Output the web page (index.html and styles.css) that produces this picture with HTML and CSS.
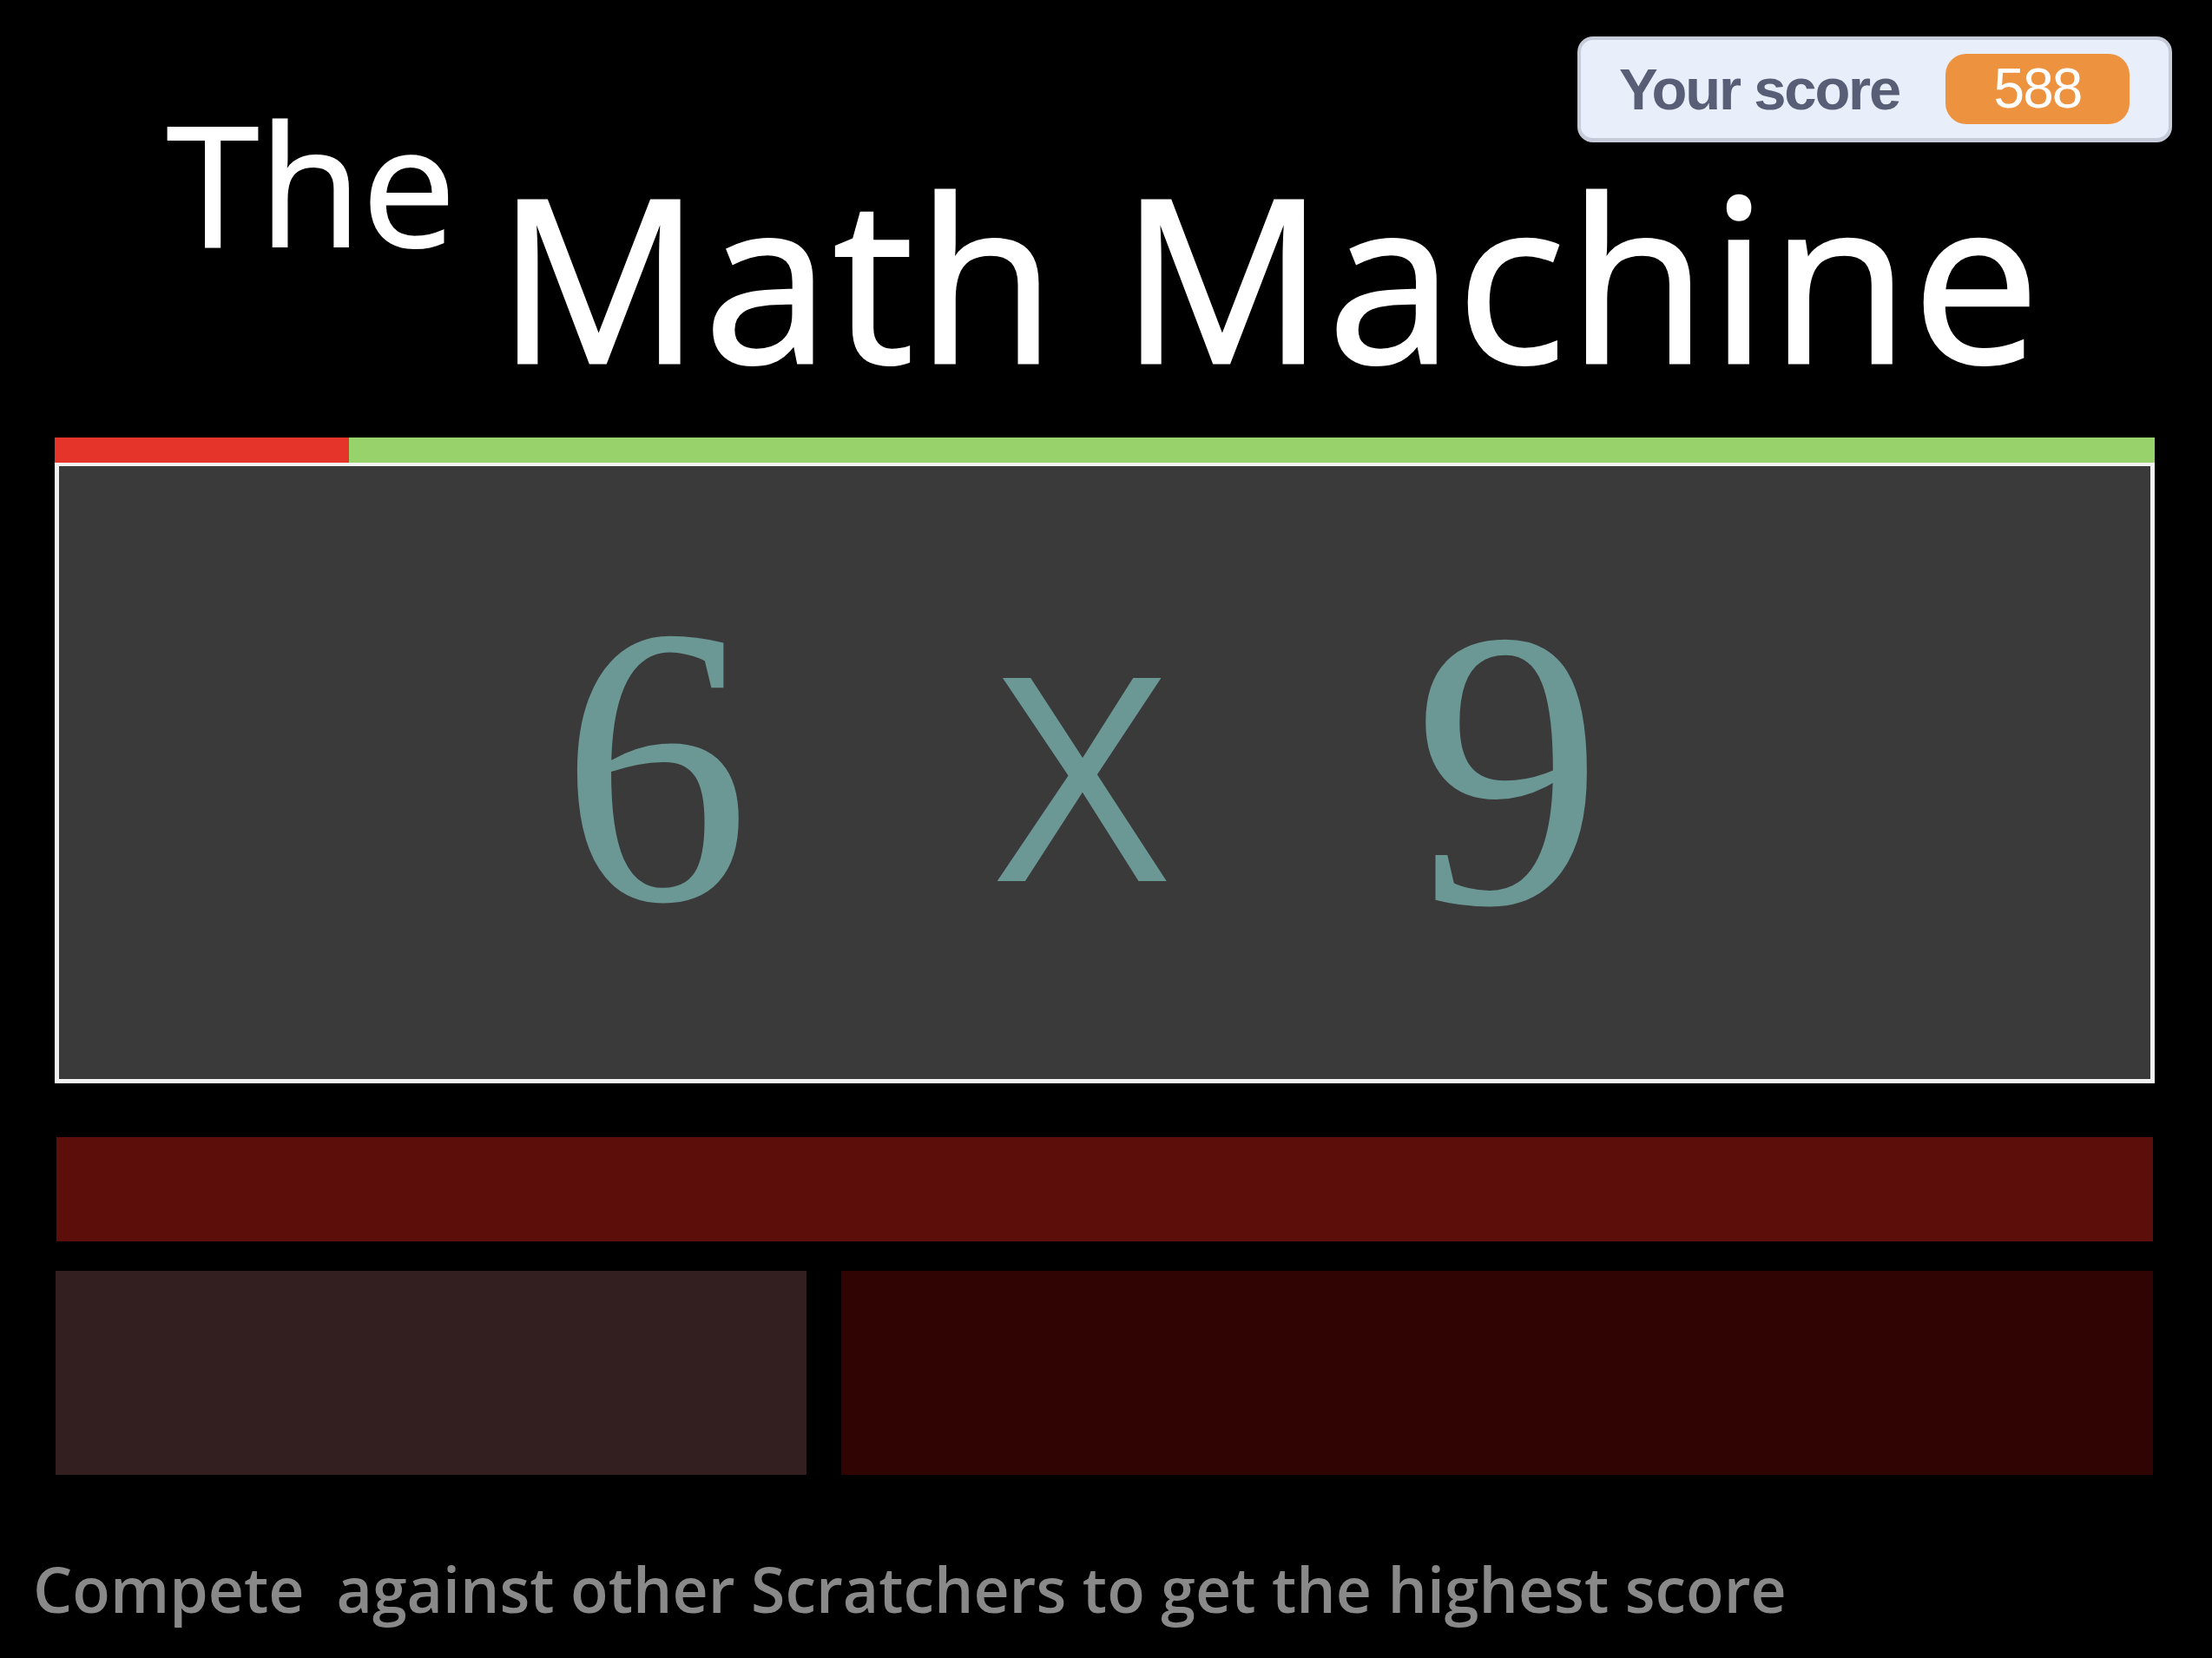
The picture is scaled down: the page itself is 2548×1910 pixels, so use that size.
FILE: index.html
```html
<!DOCTYPE html>
<html lang="en">
<head>
<meta charset="utf-8">
<title>The Math Machine</title>
<link rel="stylesheet" href="styles.css">
</head>
<body>
<div class="monitor">
  <span class="monitor-label">Your score</span>
  <span class="monitor-value">588</span>
</div>
<main class="stage">
  <header class="title">
    <span class="title-the">The</span>
    <span class="title-main">Math Machine</span>
  </header>
  <div class="timer">
    <div class="timer-used" style="width:339px"></div>
    <div class="timer-left"></div>
  </div>
  <section class="question">
    <span class="q-num q-first">6</span>
    <span class="q-op">X</span>
    <span class="q-num q-second">9</span>
  </section>
  <div class="answer-bar"></div>
  <div class="answer-row">
    <div class="answer-left"></div>
    <div class="answer-right"></div>
  </div>
</main>
<p class="footer">Compete&nbsp; against other Scratchers to get the highest score</p>
</body>
</html>
```

FILE: styles.css
```css
html, body {
  margin: 0;
  padding: 0;
  background: #000;
}

body {
  width: 2548px;
  height: 1910px;
  overflow: hidden;
  position: relative;
  font-family: "Open Sans", "Noto Sans", sans-serif;
}

/* score monitor overlay */
.monitor {
  position: absolute;
  left: 1817px;
  top: 42px;
  width: 685px;
  height: 122px;
  box-sizing: border-box;
  background: #e8eefa;
  border: 4px solid #c5cbd8;
  border-bottom-width: 5px;
  border-radius: 18px;
  display: flex;
  align-items: center;
  justify-content: space-between;
  padding: 0 45px 0 44px;
  font-family: "Liberation Sans", Arial, sans-serif;
}

.monitor-label {
  font-size: 67px;
  font-weight: 700;
  letter-spacing: -2.2px;
  color: #575e75;
  line-height: 1;
}

.monitor-value {
  width: 212px;
  height: 81px;
  border-radius: 24px;
  background: #ed923f;
  color: #fff;
  font-size: 64px;
  letter-spacing: -2px;
  line-height: 81px;
  text-align: center;
}

.stage {
  padding-left: 63px;
  width: 2419px;
}

.title {
  height: 504px;
  box-sizing: border-box;
  display: flex;
  align-items: flex-start;
  padding-top: 113px;
  padding-left: 129px;
  color: #fff;
}

.title-the {
  font-size: 193px;
  line-height: 1;
  -webkit-text-stroke: 2px #fff;
}

.title-main {
  font-size: 262px;
  line-height: 1;
  margin-top: 73px;
  margin-left: 47px;
  letter-spacing: 3px;
  white-space: nowrap;
  -webkit-text-stroke: 3px #fff;
}

.timer {
  display: flex;
  height: 29px;
}

.timer-used {
  background: #e5352a;
}

.timer-left {
  flex: 1;
  background: #97d26a;
}

.question {
  height: 715px;
  box-sizing: border-box;
  border: 5px solid #f2f2f2;
  border-top-width: 4px;
  background: #3a3a3a;
  display: grid;
  grid-template-columns: 300px 300px 300px;
  column-gap: 191px;
  align-items: start;
  padding-left: 537px;
  color: #6b9794;
  line-height: 1;
}

.q-num {
  font-family: "Liberation Serif", "Times New Roman", serif;
  font-size: 458px;
  text-align: center;
  transform: scaleX(0.95);
}

.q-first {
  margin-top: 116px;
}

.q-second {
  margin-top: 120px;
}

.q-op {
  font-family: "Liberation Sans", Arial, sans-serif;
  font-size: 340px;
  text-align: center;
  margin-top: 190px;
  transform: scaleX(0.92);
}

.answer-bar {
  margin: 62px 2px 0 2px;
  height: 120px;
  background: #5c0f0a;
}

.answer-row {
  display: flex;
  gap: 40px;
  margin: 34px 2px 0 1px;
  height: 235px;
}

.answer-left {
  width: 865px;
  background: #331f1f;
}

.answer-right {
  flex: 1;
  background: #300402;
}

.footer {
  margin: 96px 0 0 38px;
  font-size: 71.5px;
  font-weight: 600;
  line-height: 1;
  color: #898989;
  white-space: nowrap;
}
```
